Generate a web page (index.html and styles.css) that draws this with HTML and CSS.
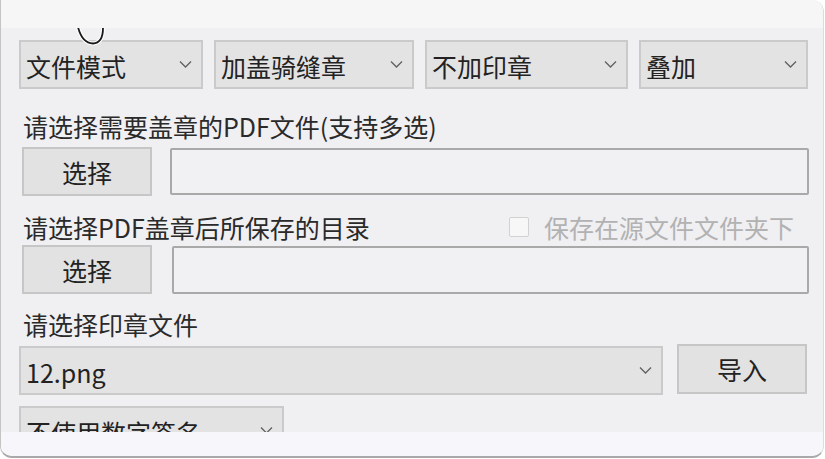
FILE: index.html
```html
<!DOCTYPE html>
<html lang="zh-CN">
<head>
<meta charset="utf-8">
<title>PDF盖章</title>
<link rel="stylesheet" href="styles.css">
</head>
<body>
<div class="card">
  <div class="strip-top"></div>
  <div class="panel">
    <svg class="cursor" width="32" height="20" viewBox="0 0 32 20">
      <path d="M3 -1 Q 7 15 18 15.5 Q 28 15 28 0" fill="none" stroke="#fff" stroke-width="4"/>
      <path d="M3 -1 Q 7 15 18 15.5 Q 28 15 28 0" fill="none" stroke="#1a1a1a" stroke-width="1.8"/>
    </svg>
    <div class="row row-modes">
      <div class="select w1"><span>文件模式</span><svg class="chev" viewBox="0 0 12 7"><path d="M0.5 0.5 L6 6 L11.5 0.5" /></svg></div>
      <div class="select w2"><span>加盖骑缝章</span><svg class="chev" viewBox="0 0 12 7"><path d="M0.5 0.5 L6 6 L11.5 0.5" /></svg></div>
      <div class="select w3"><span>不加印章</span><svg class="chev" viewBox="0 0 12 7"><path d="M0.5 0.5 L6 6 L11.5 0.5" /></svg></div>
      <div class="select w4"><span>叠加</span><svg class="chev" viewBox="0 0 12 7"><path d="M0.5 0.5 L6 6 L11.5 0.5" /></svg></div>
    </div>

    <div class="label l1">请选择需要盖章的PDF文件(支持多选)</div>
    <div class="row">
      <div class="btn">选择</div>
      <div class="input in1"></div>
    </div>

    <div class="label l2 split">
      <span>请选择PDF盖章后所保存的目录</span>
      <span class="check"><span class="box"></span><span class="check-text">保存在源文件文件夹下</span></span>
    </div>
    <div class="row">
      <div class="btn">选择</div>
      <div class="input in2"></div>
    </div>

    <div class="label l3">请选择印章文件</div>
    <div class="row row-stamp">
      <div class="select w5"><span>12.png</span><svg class="chev" viewBox="0 0 12 7"><path d="M0.5 0.5 L6 6 L11.5 0.5" /></svg></div>
      <div class="btn btn-import">导入</div>
    </div>

    <div class="row row-sign">
      <div class="select w6"><span>不使用数字签名</span><svg class="chev" viewBox="0 0 12 7"><path d="M0.5 0.5 L6 6 L11.5 0.5" /></svg></div>
    </div>
  </div>
  <div class="strip-bottom"></div>
</div>
</body>
</html>
```

FILE: styles.css
```css
html, body {
  margin: 0;
  padding: 0;
  background: #ffffff;
}

body {
  width: 825px;
  height: 459px;
  overflow: hidden;
  font-family: "Noto Sans CJK SC", "Noto Sans", sans-serif;
  color: #262626;
}

.card {
  width: 822px;
  height: 456px;
  background: #f6f6f6;
  border-radius: 0 12px 12px 12px;
  border-left: 1px solid #c4c4c4;
  border-bottom: 2px solid #a9a9a9;
  border-right: 1px solid #dcdcdc;
  overflow: hidden;
  display: flex;
  flex-direction: column;
}

.strip-top {
  height: 28px;
  flex: none;
  background: #f6f6f6;
}

.panel {
  position: relative;
  height: 404px;
  flex: none;
  background: #f0eff2;
  overflow: hidden;
  padding: 12px 14px 0 18px;
  box-sizing: border-box;
}

.strip-bottom {
  flex: 1;
  background: #f7f6fa;
}

.cursor {
  position: absolute;
  left: 74px;
  top: 0;
}

.row {
  display: flex;
  align-items: center;
}

.row-modes {
  gap: 11px;
}

.select {
  height: 49px;
  box-sizing: border-box;
  background: #e3e3e3;
  border: 2px solid #cacaca;
  display: flex;
  align-items: center;
  justify-content: space-between;
  padding: 0 9px 0 5px;
  font-size: 25px;
  line-height: 1;
  color: #222222;
  flex: none;
}

.select span {
  position: relative;
  top: 2px;
}

.chev {
  width: 13px;
  height: 7px;
  fill: none;
  stroke: #606060;
  stroke-width: 1.3;
}

.w1 { width: 184px; }
.w2 { width: 200px; }
.w3 { width: 203px; }
.w4 { width: 169px; }
.w5 { width: 644px; }
.w6 { width: 265px; }

.label {
  font-size: 25px;
  line-height: 34px;
  height: 34px;
  padding-left: 4px;
  color: #2a2a2a;
}

.l1 { margin: 20px 0 4px; }
.l2 { margin: 14px 0 1px; }
.l3 { margin: 13px 0 5px; }

.split {
  display: flex;
  justify-content: space-between;
  padding-right: 15px;
}

.check {
  display: flex;
  align-items: center;
  gap: 15px;
}

.box {
  width: 20px;
  height: 20px;
  box-sizing: border-box;
  border: 1.5px solid #d2d2d2;
  background: #f7f7f7;
  border-radius: 2px;
}

.check-text {
  color: #b2b2b2;
}

.btn {
  width: 130px;
  height: 49px;
  margin-left: 3px;
  box-sizing: border-box;
  background: #e2e2e2;
  border: 2px solid #c6c6c6;
  display: flex;
  align-items: center;
  justify-content: center;
  font-size: 25px;
  color: #222222;
  flex: none;
}

.input {
  height: 47px;
  box-sizing: border-box;
  background: #f1f0f3;
  border: 2px solid #a9a9a9;
  border-radius: 2px;
  flex: none;
}

.in1 { width: 639px; margin-left: 18px; }
.in2 { width: 637px; margin-left: 20px; height: 48px; }

.row-stamp {
  align-items: flex-start;
  gap: 14px;
}

.btn-import {
  margin: -2px 0 0 0;
  width: 130px;
  height: 50px;
}

.row-sign {
  margin-top: 11px;
}
```
